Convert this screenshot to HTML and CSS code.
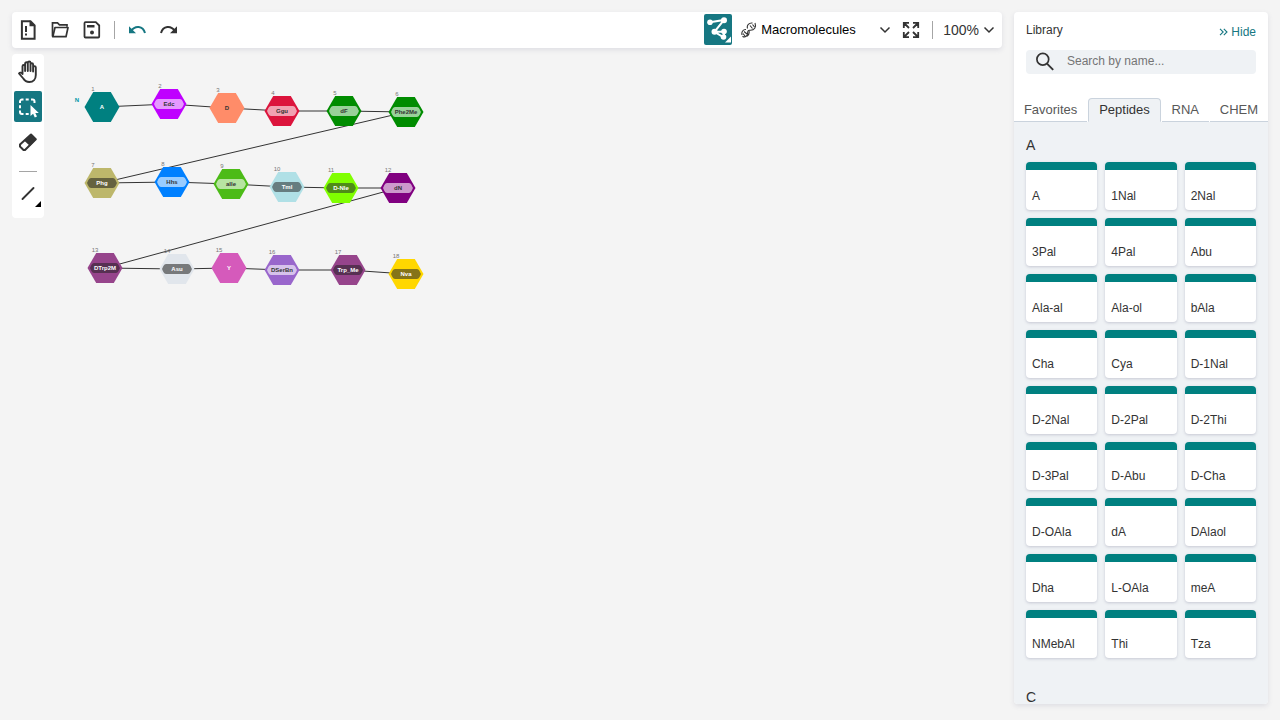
FILE: index.html
```html
<!DOCTYPE html>
<html lang="en">
<head>
<meta charset="utf-8">
<title>Macromolecules editor</title>
<link rel="stylesheet" href="styles.css">
</head>
<body>
<div class="app">
  <div class="workspace">
    <header class="topbar">
      <button class="icon-btn" aria-label="Clear canvas"><svg width="24" height="24" viewBox="0 0 24 24"><path d="M5.900 3.200h8.600l4.100 4.300v13.200H5.900z" fill="none" stroke="#333" stroke-width="2"/><path d="M13.500 2.200v6h6z" fill="#333"/><path d="M9 8h2v6H9zM9 15.500h2v2H9z" fill="#333"/></svg></button>
      <button class="icon-btn" aria-label="Open"><svg width="24" height="24" viewBox="0 0 24 24"><path d="M4.500 18.500V4.800h5l2 2h7.500v2" fill="none" stroke="#333" stroke-width="1.700"/><path d="M7 9.500h13l-2 9.200H4.800z" fill="none" stroke="#333" stroke-width="1.700" stroke-linejoin="round"/></svg></button>
      <button class="icon-btn" aria-label="Save"><svg width="24" height="24" viewBox="0 0 24 24"><path d="M5.500 4.200h10.300L19.200 7.500V18.500a1 1 0 0 1-1 1H5.500a1 1 0 0 1-1-1V5.200a1 1 0 0 1 1-1z" fill="none" stroke="#333" stroke-width="1.800"/><path d="M7 7h7.500v2.500H7z" fill="#333"/><circle cx="12" cy="14.500" r="2" fill="#333"/></svg></button>
      <span class="divider"></span>
      <button class="icon-btn undo" aria-label="Undo"><svg width="24" height="24" viewBox="0 0 24 24"><path d="M6 13c4-6 12-5.500 14 2" fill="none" stroke="currentColor" stroke-width="2"/><path d="M4 8.300v7h7z" fill="currentColor"/></svg></button>
      <button class="icon-btn" aria-label="Redo"><svg width="24" height="24" viewBox="0 0 24 24"><path d="M18 13c-4-6-12-5.500-14 2" fill="none" stroke="currentColor" stroke-width="2"/><path d="M20 8.300v7h-7z" fill="currentColor"/></svg></button>
      <span class="spacer"></span>
      <button class="layout-btn" aria-label="Layout mode"><svg width="28" height="31" viewBox="0 0 28 31"><path d="M6 8.300L20 6L10.500 17.800H20V23.500L10.500 17.800" fill="none" stroke="#fff" stroke-width="2"/><circle cx="6" cy="8.300" r="2.800" fill="#fff"/><circle cx="20" cy="6.300" r="3" fill="#fff"/><circle cx="10.500" cy="17.800" r="3" fill="#fff"/><circle cx="20" cy="17.500" r="2.800" fill="#fff"/><circle cx="19.500" cy="23" r="2.800" fill="#fff"/><path d="M21 28.500L27 22.500v6z" fill="#fff"/></svg></button>
      <label class="mode">
        <svg width="16" height="18" viewBox="0 0 16 18"><g fill="none" stroke="#333" stroke-width="1.100"><path d="M14 2c1.500 4-.5 7.500-5 7.300C5 9 8 13 5.500 15c-1.500 1.200-3 1-4 .2" /><path d="M11.500 2C8 1.500 5.500 4.500 6.500 7.500M5 8.500C2 8.300 .3 11 1 14M8 10c.5 2-.3 4-2 5.200"/><path d="M9 4.500l2.500 3M11.500 3.500l2 2.500M3 10.500l3 2.500M2 12.500l2 2.500"/></g></svg>
        <select aria-label="Editor mode"><option>Macromolecules</option></select>
        <svg class="chevron" width="12" height="8" viewBox="0 0 12 8"><path d="M1.500 1.500L6 6l4.500-4.500" fill="none" stroke="#333" stroke-width="1.500"/></svg>
      </label>
      <button class="icon-btn full" aria-label="Full screen"><svg width="24" height="24" viewBox="0 0 24 24"><path d="M4.800 10V4.800H10M5 5l5 5M14 4.800h5.200V10M19 5l-5 5M4.800 14v5.200H10M5 19l5-5M14 19.200h5.200V14M19 19l-5-5" fill="none" stroke="#333" stroke-width="1.800"/></svg></button>
      <span class="divider"></span>
      <button class="zoom">100%<svg width="12" height="8" viewBox="0 0 12 8"><path d="M1.500 1.500L6 6l4.500-4.500" fill="none" stroke="#333" stroke-width="1.500"/></svg></button>
    </header>
    <div class="stage">
      <nav class="tools" aria-label="Tools">
        <button class="tool" aria-label="Hand"><svg width="24" height="24" viewBox="0 0 24 24"><path d="M6.500 14V6.300a1.300 1.300 0 0 1 2.600 0V11V3.600a1.300 1.300 0 0 1 2.700 0V11V2.800a1.300 1.300 0 0 1 2.700 0V11V4.500a1.300 1.300 0 0 1 2.600 0V11.500V7.500a1.300 1.300 0 0 1 2.700 0V15c0 4-2.500 7-6.500 7c-3 0-4.500-1-6-3.500L3 13.500c1-1.500 2.500-.8 3.500.5z" fill="none" stroke="#333" stroke-width="1.900" stroke-linejoin="round"/></svg></button>
        <button class="tool active" aria-label="Rectangle selection"><svg width="24" height="24" viewBox="0 0 24 24"><path d="M4 8V6.500a2 2 0 0 1 2-2h1.500M9.700 4.500h3M15 4.500h1.500a2 2 0 0 1 2 2V8M4 10.200v3M4 15.500V17a2 2 0 0 0 2 2h1.500M9.700 19h3" fill="none" stroke="#fff" stroke-width="2"/><path d="M14.500 10v11l2.600-2.200 1.700 3.700 2.200-1-1.700-3.600h3.500z" fill="#fff"/></svg></button>
        <button class="tool" aria-label="Erase"><svg width="24" height="24" viewBox="0 0 24 24"><path d="M4 14.500L15 4.500l4.800 4.800L9 20h-1.500L4 16.500z" fill="#fff" stroke="#333" stroke-width="2" stroke-linejoin="round"/><path d="M8 10.500L15 4l5.300 5.300L14 16z" fill="#333"/></svg></button>
        <span class="rule"></span>
        <button class="tool bond" aria-label="Single bond"><svg width="28" height="28" viewBox="0 0 28 28"><path d="M8.500 19L19.500 8" stroke="#333" stroke-width="1.900" stroke-linecap="round"/><path d="M21 27l6-6v6z" fill="#000"/></svg></button>
      </nav>
      <svg class="canvas" width="400" height="240" viewBox="52 56 400 240" role="img" aria-label="Peptide chain">
        <defs>
          <path id="hex" d="M-17.500 0L-8.800-15H8.800L17.500 0L8.800 15H-8.800z"/>
          <path id="tag" d="M-15 0C-14-2-13-5-11-5H11C13-5 14-2 15 0C14 2 13 5 11 5H-11C-13 5-14 2-15 0z"/>
        </defs>
        <path class="bonds" d="M102 107L169 104L227 108L282 111L344 111L406 112L102 183L172 182L231 184L287 187L341 188L398 188L105 268L177 269L229 268L282 270L348 270L406 274"/>
        <text class="end" x="77" y="102">N</text>
        <g id="monomers"></g>
      </svg>
    </div>
  </div>
  <aside class="library">
    <div class="lib-head">
      <h1>Library</h1>
      <button class="hide"><svg width="9" height="8" viewBox="0 0 9 8"><path d="M1 .8L4.200 4L1 7.200M4.800.8L8 4L4.800 7.200" fill="none" stroke="currentColor" stroke-width="1.100"/></svg>Hide</button>
    </div>
    <label class="search">
      <svg width="20" height="20" viewBox="0 0 20 20"><circle cx="7.800" cy="7.300" r="5.900" fill="none" stroke="#333" stroke-width="1.700"/><path d="M12 11.700l6.200 6.200" stroke="#333" stroke-width="1.900"/></svg>
      <input type="text" placeholder="Search by name..." aria-label="Search by name">
    </label>
    <div class="tabs" role="tablist">
      <button role="tab">Favorites</button>
      <button role="tab" class="selected" aria-selected="true">Peptides</button>
      <button role="tab">RNA</button>
      <button role="tab">CHEM</button>
    </div>
    <div class="list">
      <h2>A</h2>
      <div class="cards" id="cards"></div>
      <h2 class="next">C</h2>
    </div>
  </aside>
</div>
<script src="app.js"></script>
</body>
</html>
```

FILE: styles.css
```css
* { box-sizing: border-box; }
body {
  margin: 0;
  background: #f4f4f4;
  color: #333;
  font: 12px/16px "Liberation Sans", Arial, sans-serif;
}
button, select, input { font: inherit; color: inherit; border: 0; background: none; padding: 0; margin: 0; }
h1, h2 { margin: 0; font-weight: 400; }
svg { display: block; flex: none; }
.app { display: flex; gap: 12px; height: 100vh; padding: 12px 12px 16px; overflow: hidden; }
.workspace { flex: 1; min-width: 0; display: flex; flex-direction: column; gap: 6px; }

.topbar {
  display: flex;
  align-items: center;
  height: 36px;
  padding: 0 7px 1px 4px;
  background: #fff;
  border-radius: 4px;
  box-shadow: 0 2px 5px rgba(103, 104, 132, .15);
}
.icon-btn { display: flex; align-items: center; justify-content: center; width: 24px; height: 24px; margin-right: 8px; }
.divider { width: 1px; height: 18px; margin: 0 10px 0 2px; background: #a5a5a5; }
.undo { color: #167782; }
.spacer { flex: 1; }
.layout-btn { width: 28px; height: 31px; margin-right: 9px; background: #167782; border-radius: 2px; }
.mode { display: flex; align-items: center; gap: 4px; width: 150px; margin-right: 8px; }
.mode select { flex: 1; min-width: 0; appearance: none; font-size: 13px; line-height: 18px; color: #000; }
.full { margin-right: 7px; }
.zoom { display: flex; align-items: center; gap: 4px; font-size: 14px; line-height: 18px; }

.stage { flex: 1; min-height: 0; display: flex; align-items: flex-start; gap: 8px; }
.tools {
  display: flex;
  flex-direction: column;
  align-items: center;
  width: 32px;
  padding: 2px 0 9px;
  gap: 4px;
  background: #fff;
  border-radius: 4px;
}
.tool { display: flex; align-items: center; justify-content: center; width: 28px; height: 31px; border-radius: 2px; }
.active { background: #167782; }
.rule { width: 18px; height: 1px; margin: 10px 0 2px; background: #a5a5a5; }
.canvas { margin-top: 2px; overflow: visible; text-anchor: middle; }
.bonds { fill: none; stroke: #333; stroke-width: 1; }
.end { font-size: 6px; font-weight: 700; fill: #0097a8; }
.number { font-size: 6px; fill: #777; }
.name { font-size: 6px; font-weight: 700; }

.library {
  display: flex;
  flex-direction: column;
  width: 254px;
  min-height: 0;
  background: #fff;
  border-radius: 4px;
  box-shadow: 0 2px 5px rgba(103, 104, 132, .15);
  overflow: hidden;
}
.lib-head { display: flex; justify-content: space-between; padding: 10px 12px 0; height: 38px; }
.lib-head h1 { font-size: 12px; line-height: 16px; }
.hide { display: flex; align-items: center; gap: 3px; height: 20px; color: #167782; }
.search { display: flex; align-items: center; gap: 12px; height: 24px; margin: 0 12px; padding-left: 9px; background: #eff2f5; border-radius: 4px; }
.search input { flex: 1; min-width: 0; height: 20px; padding-bottom: 2px; outline: 0; }
.search input::placeholder { color: #757575; opacity: 1; }
.tabs { display: flex; gap: 1px; height: 24px; margin-top: 24px; flex: none; }
.tabs button { flex: 1 1 auto; padding: 0 8px; border-bottom: 1px solid #cad3dd; font-size: 13px; line-height: 20px; color: #585858; }
.tabs .selected { border: 1px solid #cad3dd; border-bottom-color: #eff2f5; border-radius: 4px 4px 0 0; background: #eff2f5; color: #333; }
.list { flex: 1; min-height: 0; overflow: hidden; padding: 13px 12px; background: #eff2f5; }
.list h2 { font-size: 14px; line-height: 20px; }
.cards { display: grid; grid-template-columns: repeat(3, 1fr); gap: 8px; margin: 7px 0 29px; }
.card {
  display: flex;
  align-items: flex-end;
  height: 48px;
  padding: 0 6px 6px;
  border-top: 8px solid #008080;
  border-radius: 4px;
  background: #fff;
  box-shadow: 0 1px 3px rgba(103, 104, 132, .3);
  text-align: left;
}
```

FILE: app.js
```js
const names = ["A", "1Nal", "2Nal", "3Pal", "4Pal", "Abu", "Ala-al", "Ala-ol", "bAla", "Cha", "Cya", "D-1Nal", "D-2Nal", "D-2Pal", "D-2Thi", "D-3Pal", "D-Abu", "D-Cha", "D-OAla", "dA", "DAlaol", "Dha", "L-OAla", "meA", "NMebAl", "Thi", "Tza"];
document.getElementById("cards").innerHTML = names.map(n => `<button class="card">${n}</button>`).join("");

// name, x, y, fill, text colour, tag colour
const monomers = [
  ["A", 102, 107, "#008080", "#fff"],
  ["Edc", 169, 104, "#bf00ff", "#333", "#e599ff"],
  ["D", 227, 108, "#ff8c69", "#333"],
  ["Ggu", 282, 111, "#dc143c", "#333", "#f1a1b1"],
  ["dF", 344, 111, "#008c00", "#333", "#99d199"],
  ["Phe2Me", 406, 112, "#008c00", "#333", "#99d199"],
  ["Phg", 102, 183, "#bdb76b", "#fff", "#65623f"],
  ["Hhs", 172, 182, "#0080ff", "#333", "#99ccff"],
  ["aIle", 231, 184, "#4cbb17", "#333", "#b7e4a2"],
  ["Tml", 287, 187, "#b0e0e6", "#fff", "#667d80"],
  ["D-Nle", 341, 188, "#80ff00", "#fff", "#4f8c18"],
  ["dN", 398, 188, "#800080", "#333", "#cc99cc"],
  ["DTrp2M", 105, 268, "#96448b", "#fff", "#573052"],
  ["Asu", 177, 269, "#e1e6ec", "#fff", "#77797b"],
  ["Y", 229, 268, "#d55abb", "#fff"],
  ["DSerBn", 282, 270, "#9966cc", "#333", "#d6c2eb"],
  ["Trp_Me", 348, 270, "#96448b", "#fff", "#573052"],
  ["Nva", 406, 274, "#ffd700", "#fff", "#857418"]
];
document.getElementById("monomers").innerHTML = monomers.map(([n, x, y, fill, ink, tag], i) => `
  <g transform="translate(${x} ${y})">
    <use href="#hex" fill="${fill}"/>
    ${tag ? `<use href="#tag" fill="${tag}"/>` : ""}
    <text class="number" x="${i < 9 ? -9 : -10}" y="-16">${i + 1}</text>
    <text class="name" y="2" fill="${ink}">${n}</text>
  </g>`).join("");
```
